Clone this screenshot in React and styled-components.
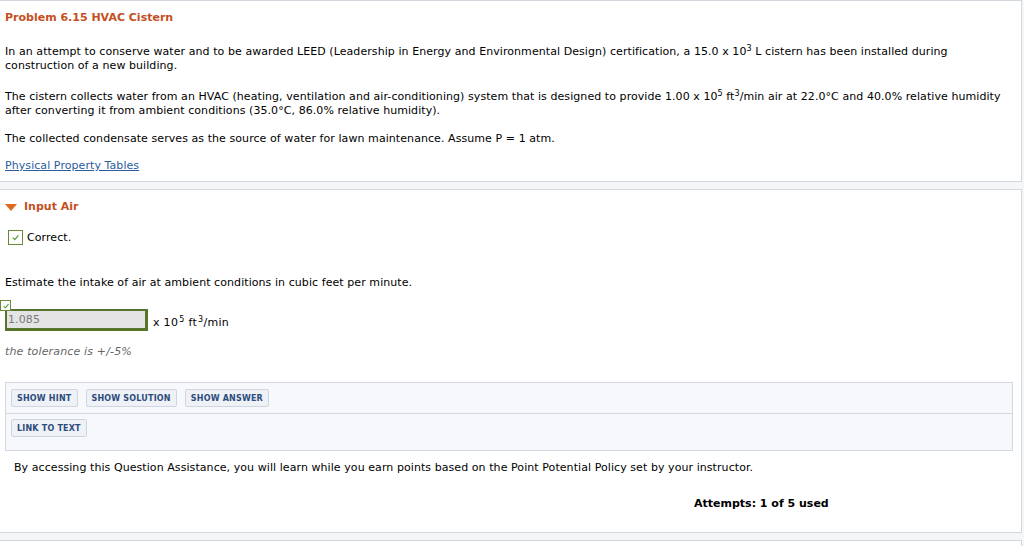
import styled, { createGlobalStyle } from "styled-components";

const Global = createGlobalStyle`
    body{
        margin: 0;
        background: #f5f6f8;
        font-family: "DejaVu Sans", Verdana, sans-serif;
        font-size: 11px;
        color: #000;
    }
`

const Page = styled.div`
    display: flex;
    flex-direction: column;
    row-gap: 7px;
    width: 1022px;
`

const Panel = styled.div`
    background: #fff;
    border: 1px solid #d3d8df;
    border-left: none;
    padding: ${({pad}) => pad || "0 5px"};
    min-height: ${({h}) => h || "auto"};
`

const Title = styled.h2`
    margin: 0 0 20px 0;
    font-size: 11px;
    font-weight: bold;
    color: #c4501e;
    line-height: 14px;
`

const Para = styled.p`
    margin: 0 0 ${({mb}) => mb || "13px"} 0;
    line-height: 14px;
    letter-spacing: 0.07px;
    sup{
        font-size: 8px;
        line-height: 0;
        vertical-align: 4px;
    }
`

const Link = styled.a`
    color: #2b5c9c;
    text-decoration: underline;
    line-height: 14px;
    letter-spacing: 0.07px;
    display: inline-block;
`

const PartHead = styled.div`
    display: flex;
    align-items: center;
    column-gap: 7px;
    font-weight: bold;
    color: #c4501e;
    line-height: 14px;
    margin-bottom: 16px;
`

const Triangle = styled.span`
    width: 0;
    height: 0;
    border-left: 6px solid transparent;
    border-right: 6px solid transparent;
    border-top: 7px solid #e0691c;
`

const CheckRow = styled.div`
    display: flex;
    align-items: center;
    column-gap: 4px;
    padding-left: 3px;
    line-height: 14px;
    letter-spacing: 0.07px;
    margin-bottom: 31px;
`

const CheckBox = styled.span`
    width: ${({s}) => s || 13}px;
    height: ${({s}) => s || 13}px;
    border: 1px solid #6a8a3a;
    background: #fff;
    display: flex;
    align-items: center;
    justify-content: center;
    box-sizing: content-box;
`

const Tick = ({size = 9}) => (
    <svg width={size} height={size} viewBox="0 0 10 10">
        <path d="M2 5.2 L4.2 7.3 L8.2 2.6" fill="none" stroke="#4e9a2e" strokeWidth="1.3" />
    </svg>
)

const AnswerRow = styled.div`
    display: flex;
    align-items: flex-end;
    column-gap: 4px;
    margin-top: 10px;
    letter-spacing: 0.1px;
    sup{
        font-size: 8px;
        line-height: 0;
        vertical-align: 4px;
        padding-left: 1px;
    }
`

const InputWrap = styled.div`
    position: relative;
    margin-top: 9px;
    .mark{
        position: absolute;
        left: -5px;
        top: -9px;
    }
`

const Field = styled.div`
    width: 137px;
    height: 17px;
    border: 2px solid #56742a;
    border-right-width: 3px;
    border-bottom-width: 3px;
    background: #e4e4e4;
    color: #7a7a7a;
    font-size: 11px;
    line-height: 18px;
    padding-left: 1px;
`

const Unit = styled.span`
    line-height: 14px;
    padding-bottom: 1px;
    margin-left: 1px;
    letter-spacing: 0.3px;
`

const Tolerance = styled.div`
    font-style: italic;
    color: #666;
    line-height: 14px;
    letter-spacing: 0.15px;
    margin: 14px 0 23px 0;
`

const Assist = styled.div`
    background: #f6f8fb;
    border: 1px solid #d4d9e1;
    margin-right: 3px;
`

const ButtonRow = styled.div`
    display: flex;
    column-gap: 8px;
    padding: 6px 5px;
    & + &{
        border-top: 1px solid #d4d9e1;
        padding: 5px 5px 13px 5px;
    }
`

const Btn = styled.button`
    font-family: "DejaVu Sans", Verdana, sans-serif;
    font-size: 8px;
    font-weight: bold;
    letter-spacing: 0.2px;
    color: #2d4b7d;
    background: #eef1f6;
    border: 1px solid #d0d6df;
    border-radius: 2px;
    height: 18px;
    padding: 0 5px;
    cursor: pointer;
`

const Note = styled.p`
    margin: 10px 0 0 9px;
    line-height: 14px;
    letter-spacing: 0.07px;
`

const Attempts = styled.div`
    font-weight: bold;
    line-height: 14px;
    margin: 22px 0 0 689px;
`

export default function App() {
    return (
        <>
            <Global />
            <Page>
                <Panel pad="10px 5px 8px 5px">
                    <Title>Problem 6.15 HVAC Cistern</Title>
                    <Para mb="17px">In an attempt to conserve water and to be awarded LEED (Leadership in Energy and Environmental Design) certification, a 15.0 x 10<sup>3</sup> L cistern has been installed during construction of a new building.</Para>
                    <Para mb="14px">The cistern collects water from an HVAC (heating, ventilation and air-conditioning) system that is designed to provide 1.00 x 10<sup>5</sup> ft<sup>3</sup>/min air at 22.0°C and 40.0% relative humidity after converting it from ambient conditions (35.0°C, 86.0% relative humidity).</Para>
                    <Para mb="13px">The collected condensate serves as the source of water for lawn maintenance. Assume P = 1 atm.</Para>
                    <Link href="#">Physical Property Tables</Link>
                </Panel>
                <Panel pad="10px 5px 21px 5px">
                    <PartHead><Triangle />Input Air</PartHead>
                    <CheckRow>
                        <CheckBox><Tick /></CheckBox>
                        Correct.
                    </CheckRow>
                    <Para mb="0">Estimate the intake of air at ambient conditions in cubic feet per minute.</Para>
                    <AnswerRow>
                        <InputWrap>
                            <CheckBox className="mark" s={9}><Tick size={8} /></CheckBox>
                            <Field>1.085</Field>
                        </InputWrap>
                        <Unit>x 10<sup>5</sup> ft<sup>3</sup>/min</Unit>
                    </AnswerRow>
                    <Tolerance>the tolerance is +/-5%</Tolerance>
                    <Assist>
                        <ButtonRow>
                            <Btn>SHOW HINT</Btn>
                            <Btn>SHOW SOLUTION</Btn>
                            <Btn>SHOW ANSWER</Btn>
                        </ButtonRow>
                        <ButtonRow>
                            <Btn>LINK TO TEXT</Btn>
                        </ButtonRow>
                    </Assist>
                    <Note>By accessing this Question Assistance, you will learn while you earn points based on the Point Potential Policy set by your instructor.</Note>
                    <Attempts>Attempts: 1 of 5 used</Attempts>
                </Panel>
                <Panel h="20px" />
            </Page>
        </>
    )
}
